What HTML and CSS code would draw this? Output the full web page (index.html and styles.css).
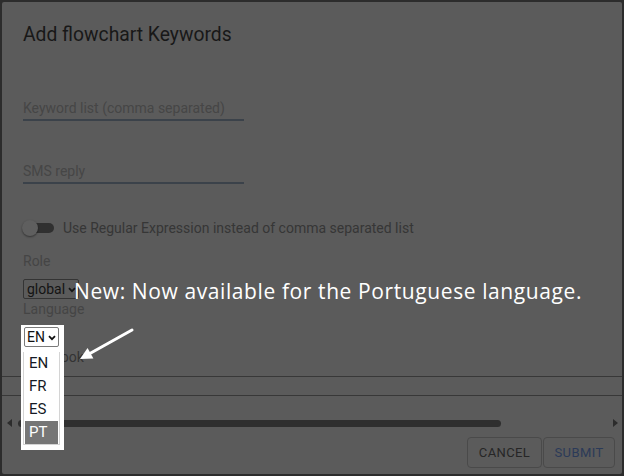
FILE: index.html
```html
<!DOCTYPE html>
<html lang="en">
<head>
<meta charset="utf-8">
<title>Add flowchart Keywords</title>
<link rel="stylesheet" href="styles.css">
</head>
<body>
<div class="dialog">
  <div class="content">
    <h2 class="title">Add flowchart Keywords</h2>
    <div class="field f1"><span class="ph">Keyword list (comma separated)</span></div>
    <div class="field f2"><span class="ph">SMS reply</span></div>
    <div class="toggle-row">
      <span class="switch"><span class="track"></span><span class="knob"></span></span>
      <span class="tlabel">Use Regular Expression instead of comma separated list</span>
    </div>
    <div class="label role">Role</div>
    <div class="select sel-global">global<svg class="chev" width="8" height="6" viewBox="0 0 8 6"><path d="M1 1.2 L4 4.2 L7 1.2" fill="none" stroke="#151515" stroke-width="1.8"/></svg></div>
    <div class="label">Language</div>
    <div class="lang-row">
      <div class="popup">
        <div class="select sel-en">EN<svg class="chev" width="8" height="6" viewBox="0 0 8 6"><path d="M1 1.2 L4 4.2 L7 1.2" fill="none" stroke="#111" stroke-width="1.8"/></svg></div>
        <ul class="menu">
          <li>EN</li>
          <li>FR</li>
          <li>ES</li>
          <li class="active">PT</li>
        </ul>
      </div>
    </div>
    <div class="hook">Facebook</div>
  </div>
  <div class="rules"><div class="rule"></div><div class="rule"></div></div>
  <div class="hscroll">
    <span class="arr-l"></span>
    <div class="strack"><div class="thumb"></div></div>
    <span class="arr-r"></span>
  </div>
  <div class="actions">
    <button class="btn cancel">CANCEL</button>
    <button class="btn submit">SUBMIT</button>
  </div>
  <p class="note">New: Now available for the Portuguese language.</p>
  <svg class="arrow" width="62" height="40" viewBox="0 0 62 40">
    <line x1="57" y1="5" x2="14" y2="29" stroke="#fff" stroke-width="3" stroke-linecap="round"/>
    <polygon points="5,34 18.4,33.4 12.6,22.9" fill="#fff"/>
  </svg>
</div>
</body>
</html>
```
FILE: styles.css
```css
* { box-sizing: border-box; }
body {
  margin: 0;
  background: #2c2c2c;
  font-family: Roboto, "Liberation Sans", sans-serif;
}
.dialog {
  margin: 2px;
  height: 472px;
  background: #5b5b5b;
  position: relative;
  overflow: hidden;
  border-radius: 2px;
}
.content { padding: 0 21px; }
.title {
  margin: 0;
  padding-top: 21px;
  font-size: 19.3px;
  line-height: 24px;
  font-weight: 400;
  color: #181818;
}
.field {
  width: 221px;
  font-size: 14px;
  line-height: 20px;
  padding-bottom: 1px;
  border-bottom: 2px solid #3b424a;
}
.f1 { margin-top: 51px; }
.f2 { margin-top: 40px; }
.ph { color: #464646; }
.toggle-row {
  margin-top: 34px;
  height: 20px;
  display: flex;
  align-items: center;
  font-size: 14px;
  line-height: 20px;
  color: #363636;
}
.switch {
  position: relative;
  width: 40px;
  height: 20px;
  flex: none;
}
.track {
  position: absolute;
  left: 8px;
  top: 5px;
  width: 23px;
  height: 10px;
  border-radius: 5px;
  background: #303030;
}
.knob {
  position: absolute;
  left: -1px;
  top: 2px;
  width: 16px;
  height: 16px;
  border-radius: 50%;
  background: #5f5f5f;
  box-shadow: 0 1px 2px rgba(0,0,0,0.45);
}
.label {
  font-size: 14px;
  line-height: 20px;
  color: #454545;
}
.role { margin-top: 13px; }
.select {
  display: flex;
  align-items: center;
  font-size: 14px;
  line-height: 18px;
  height: 20px;
  border: 1px solid #343434;
  border-radius: 2px;
  padding-left: 3px;
}
.chev { margin-left: 3px; margin-top: 1px; }
.sel-global {
  margin-top: 8px;
  width: 56px;
  color: #141414;
}
.lang-row {
  margin-top: 8px;
  height: 20px;
  position: relative;
}
.popup {
  position: absolute;
  left: -2px;
  top: -2px;
  width: 43px;
  height: 125px;
  background: #fff;
  padding: 2px 4px 0 2px;
  z-index: 2;
}
.sel-en {
  margin-left: 1px;
  width: 35px;
  border-color: #7a7a7a;
  color: #111;
  padding-left: 2px;
}
.menu {
  list-style: none;
  margin: 5px 0 0;
  padding: 0 1px;
  width: 37px;
  border: 1px solid #d4d4d4;
  border-top: none;
}
.menu li {
  height: 23px;
  line-height: 23px;
  font-size: 15px;
  color: #151a25;
  padding-left: 4px;
}
.menu li.active {
  background: #767676;
  color: #fff;
}
.hook {
  font-size: 14px;
  line-height: 20px;
  color: #333;
}
.rules { margin-top: 9px; }
.rule {
  height: 19px;
  border-top: 1px solid #383838;
}
.rule + .rule { height: 1px; }
.hscroll {
  margin-top: 21px;
  height: 12px;
  display: flex;
  align-items: center;
  padding: 0 4px 0 5px;
}
.arr-l {
  width: 0; height: 0;
  border-top: 4px solid transparent;
  border-bottom: 4px solid transparent;
  border-right: 5px solid #2c2c2c;
}
.arr-r {
  width: 0; height: 0;
  border-top: 4px solid transparent;
  border-bottom: 4px solid transparent;
  border-left: 5px solid #2c2c2c;
}
.strack { flex: 1; }
.thumb {
  margin-left: 6px;
  width: 483px;
  height: 7px;
  border-radius: 4px;
  background: #2f2f2f;
}
.actions {
  margin-top: 8px;
  display: flex;
  justify-content: flex-end;
  gap: 1px;
  padding-right: 7px;
}
.btn {
  height: 31px;
  background: transparent;
  border: 1px solid #4a4a4a;
  border-radius: 4px;
  font-family: Roboto, "Liberation Sans", sans-serif;
  font-size: 13px;
  letter-spacing: 0.4px;
  padding: 0;
}
.cancel { width: 75px; color: #262626; }
.submit { width: 72px; color: #2b3a58; }
.note {
  position: absolute;
  left: 72px;
  top: 275px;
  margin: 0;
  font-family: "Open Sans", sans-serif;
  font-size: 21px;
  letter-spacing: 0.6px;
  line-height: 28px;
  color: #fff;
  white-space: nowrap;
}
.arrow {
  position: absolute;
  left: 73px;
  top: 323px;
}
```
